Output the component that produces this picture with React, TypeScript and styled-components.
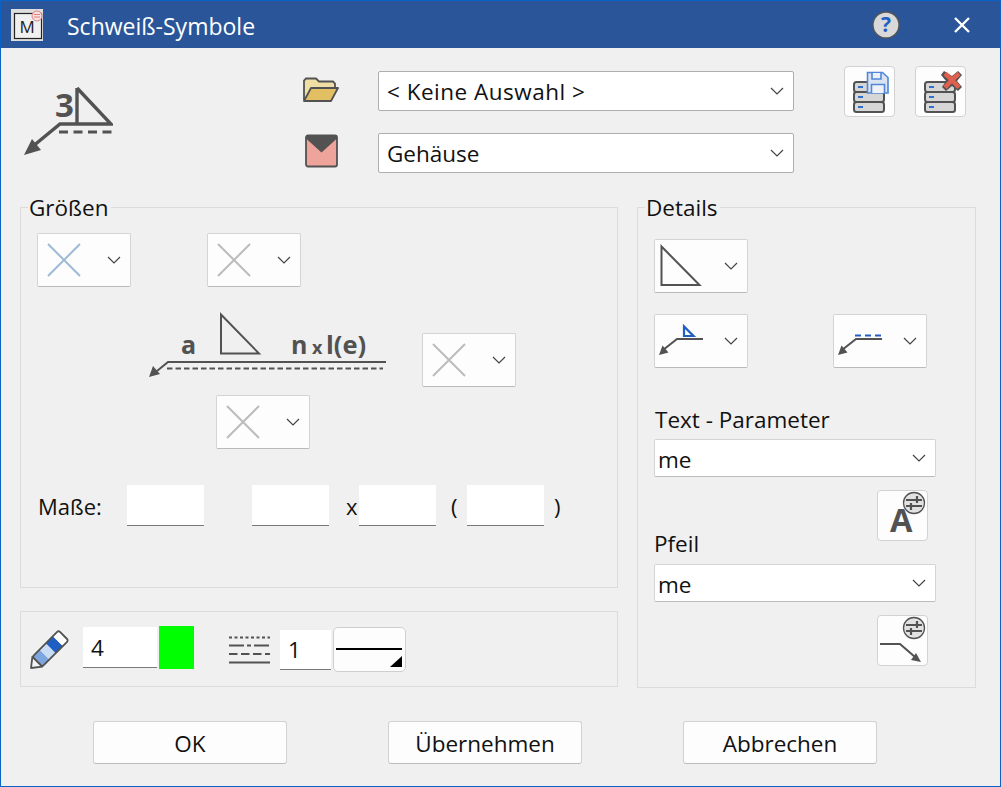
import React from 'react';
import styled, { createGlobalStyle } from 'styled-components';

const GlobalStyle = createGlobalStyle`
  html, body {
    margin: 0;
    padding: 0;
    background: #f0f0f0;
  }
  * {
    box-sizing: border-box;
  }
`;

const INK = '#525252';
const BLUE = '#1f5fc4';

const Dialog = styled.div`
  width: 1001px;
  height: 787px;
  overflow: hidden;
  display: flex;
  flex-direction: column;
  border: 1px solid #0a62c6;
  background: #f0f0f0;
  font-family: 'Open Sans', 'Noto Sans', sans-serif;
  font-size: 22.5px;
  color: #111;
`;

const TitleBar = styled.header`
  height: 47px;
  flex: none;
  display: flex;
  align-items: center;
  padding: 0 30px 0 10px;
  background: #2a5699;
  color: #fff;
`;

const TitleText = styled.span`
  margin-left: 24px;
  padding-top: 2px;
  font-size: 23px;
  flex: 1;
`;

const CloseIcon = styled.svg`
  margin-left: 53px;
`;

const Top = styled.section`
  height: 147px;
  flex: none;
  display: flex;
  align-items: flex-start;
`;

const WeldIcon = styled.svg`
  margin: 30px 0 0 23px;
  flex: none;
`;

const PickerStack = styled.div`
  width: 493px;
  margin: 23px 0 0 188px;
  display: flex;
  flex-direction: column;
  gap: 22px;
`;

const PickerRow = styled.div`
  display: flex;
  align-items: center;
`;

const PickerIcon = styled.svg`
  flex: none;
  margin-right: 38px;
`;

const Select = styled.div`
  height: 38px;
  flex: 1;
  display: flex;
  align-items: center;
  justify-content: space-between;
  padding: 0 9px 0 3px;
  background: #fff;
  border: 1px solid #d4d4d4;
  border-bottom-color: #bcbcbc;
  border-radius: 2px;
`;

const SelectText = styled.span<{ $spaced?: boolean; $nudge?: number }>`
  padding-top: ${p => p.$nudge ?? 2}px;
  letter-spacing: ${p => (p.$spaced ? '0.5px' : '0')};
`;

const TallSelect = styled(Select)`
  height: 40px;
  padding-left: 8px;
  border-color: #aeaeae;
`;

const ToolButtons = styled.div`
  margin: 18px 0 0 50px;
  display: flex;
  gap: 20px;
`;

const IconButton = styled.button`
  width: 51px;
  height: 51px;
  padding: 0;
  display: block;
  background: #fdfdfd;
  border: 1px solid #d2d2d2;
  border-radius: 4px;
  svg {
    display: block;
    margin: -1px;
  }
`;

const Main = styled.main`
  display: grid;
  grid-template-columns: 598px 339px;
  column-gap: 19px;
  padding-left: 19px;
  align-items: start;
`;

const LeftColumn = styled.div`
  display: flex;
  flex-direction: column;
  gap: 23px;
`;

const Group = styled.fieldset<{ $height: number }>`
  height: ${p => p.$height}px;
  margin: 0;
  padding: 2px 0 0 16px;
  border: 1px solid #dcdcdc;
  min-width: 0;
`;

const Legend = styled.legend`
  margin-left: -9px;
  padding: 0 2px 0 1px;
  height: 24px;
  line-height: 26px;
  font-size: 22.5px;
`;

const ComboRow = styled.div<{ $top: number; $gap?: number; $indent?: number }>`
  display: flex;
  align-items: flex-start;
  margin-top: ${p => p.$top}px;
  margin-left: ${p => p.$indent ?? 0}px;
  gap: ${p => p.$gap ?? 0}px;
`;

const Combo = styled.div<{ $offset?: number }>`
  width: 94px;
  height: 54px;
  flex: none;
  margin-top: ${p => p.$offset ?? 0}px;
  display: flex;
  align-items: center;
  justify-content: space-between;
  padding-right: 9px;
  background: #fdfdfd;
  border: 1px solid #d4d4d4;
  border-bottom-color: #bababa;
  border-radius: 2px;
  svg:first-child {
    margin: -1px;
  }
`;

const Diagram = styled.svg`
  flex: none;
`;

const MeasureRow = styled.div`
  display: flex;
  align-items: center;
  margin-top: 36px;
  height: 41px;
`;

const MeasureLabel = styled.span`
  width: 90px;
  flex: none;
  padding-left: 1px;
  font-size: 22px;
`;

const Glyph = styled.span<{ $width: number; $pad?: number }>`
  width: ${p => p.$width}px;
  flex: none;
  padding-left: ${p => p.$pad ?? 0}px;
  font-size: 22px;
`;

const Field = styled.input<{ $width: number; $height?: number }>`
  width: ${p => p.$width}px;
  height: ${p => p.$height ?? 41}px;
  flex: none;
  padding: 0 8px;
  background: #fff;
  border: 0;
  border-bottom: 1px solid #7a7a7a;
  border-radius: 0;
  font: inherit;
  font-size: 22.5px;
  color: #111;
`;

const LineBar = styled.div`
  height: 76px;
  display: flex;
  align-items: center;
  padding-left: 9px;
  border: 1px solid #dcdcdc;
`;

const Spaced = styled.div<{ $left: number; $top?: number }>`
  display: flex;
  flex: none;
  margin-left: ${p => p.$left}px;
  margin-top: ${p => p.$top ?? 0}px;
`;

const Swatch = styled.div`
  width: 35px;
  height: 43px;
  background: #00ff00;
`;

const LinePreview = styled.div`
  width: 73px;
  height: 45px;
  background: #fdfdfd;
  border: 1px solid #cfcfcf;
  border-radius: 5px;
  svg {
    display: block;
    margin: -1px;
  }
`;

const FieldLabel = styled.div`
  height: 30px;
  margin: 37px 0 4px 1px;
  line-height: 30px;
`;

const WideSelect = styled(Select)`
  width: 282px;
  flex: none;
`;

const LabelWithButton = styled.div`
  width: 274px;
  height: 70px;
  margin: 13px 0 4px;
  display: flex;
  justify-content: space-between;
`;

const LabelBelow = styled.span`
  align-self: flex-end;
  height: 31px;
  line-height: 30px;
`;

const ArrowButtonSlot = styled.div`
  margin: 13px 0 0 223px;
  width: 51px;
`;

const Footer = styled.footer`
  margin-top: 33px;
  padding-left: 92px;
  display: flex;
  gap: 101px;
`;

const PushButton = styled.button`
  width: 194px;
  height: 43px;
  padding: 2px 0 0;
  background: #fdfdfd;
  border: 1px solid #d2d2d2;
  border-bottom-color: #bcbcbc;
  border-radius: 3px;
  font: inherit;
  font-size: 22.5px;
  color: #111;
`;

const Chevron = () => (
  <svg width="14" height="8" viewBox="0 0 14 8" fill="none">
    <path d="M1 1l6 6 6-6" stroke="#444" strokeWidth="1.2" />
  </svg>
);

const CrossSymbol = ({ color = '#bcbcbc' }: { color?: string }) => (
  <svg width="54" height="54" viewBox="0 0 54 54" fill="none">
    <path d="M11 11l32 32M43 11L11 43" stroke={color} strokeWidth="2" />
  </svg>
);

const TriangleSymbol = () => (
  <svg width="54" height="54" viewBox="0 0 54 54" fill="none">
    <path d="M7.5 7.5v38.500h38z" stroke={INK} strokeWidth="2" />
  </svg>
);

const Leader = () => (
  <g>
    <path d="M49 25H23L9 36" stroke={INK} strokeWidth="2" fill="none" />
    <path d="M5 41l3.500-9.500 6 7z" fill={INK} />
  </g>
);

const LeaderTriangle = () => (
  <svg width="54" height="54" viewBox="0 0 54 54" fill="none">
    <Leader />
    <path d="M30 12.500v9.500h9.500z" stroke={BLUE} strokeWidth="2.200" />
  </svg>
);

const LeaderDashed = () => (
  <svg width="54" height="54" viewBox="0 0 54 54" fill="none">
    <Leader />
    <path d="M22 21.500h27" stroke={BLUE} strokeWidth="2.200" strokeDasharray="6 4" />
  </svg>
);

const DiskStack = () => (
  <g fill="#d6d6d6" stroke={INK} strokeWidth="2">
    <rect x="10" y="16" width="30" height="10" rx="2.500" />
    <rect x="10" y="26" width="30" height="10" rx="2.500" />
    <rect x="10" y="36" width="30" height="10" rx="2.500" />
    <path d="M14 21h5M14 31h5M14 41h5" stroke="#2f6fd0" />
  </g>
);

const SaveStackIcon = () => (
  <svg width="51" height="51" viewBox="0 0 51 51">
    <DiskStack />
    <path d="M23.500 6.500h15l5.500 5v15.500h-20.500z" fill="#d9e3f1" stroke="#5087d8" strokeWidth="1.600" />
    <path d="M28 7v6h9V7M27.500 27v-8.500h13V27" fill="#eef2f8" stroke="#5087d8" strokeWidth="1.600" />
  </svg>
);

const DeleteStackIcon = () => (
  <svg width="51" height="51" viewBox="0 0 51 51">
    <DiskStack />
    <path d="M29 5l8 5 6-5 4 4-5 6 5 6-4 4-6-5-6 5-4-4 4-6-5-6z" fill={INK} />
    <path d="M30 7.500l7 6.500 7-6.500M30 21.500l7-7.500 7 7.500" stroke="#e0604f" strokeWidth="4.500" fill="none" />
  </svg>
);

const Sliders = () => (
  <g fill="none">
    <circle cx="37" cy="13" r="10.500" fill="#e2e2e2" stroke={INK} strokeWidth="1.300" />
    <path d="M29 10h16M29 16h16" stroke={INK} strokeWidth="1.800" />
    <path d="M40 6v7M34 13v7" stroke={INK} strokeWidth="2.200" />
  </g>
);

const Note = styled.text`
  font-family: 'Open Sans', sans-serif;
  font-weight: 700;
  fill: ${INK};
`;

export default function App() {
  return (
    <>
      <GlobalStyle />
      <Dialog>
        <TitleBar>
          <svg width="32" height="32" viewBox="0 0 32 32">
            <rect width="32" height="32" fill="#dedede" />
            <rect x="3.500" y="4.500" width="27" height="25" fill="#f0f0f0" stroke="#222" strokeWidth="1.200" />
            <text x="8.500" y="24" fontSize="17" fontFamily="Open Sans, sans-serif" fill="#222">M</text>
            <circle cx="26" cy="7" r="5" fill="#f4e0e0" stroke="#e28080" />
            <path d="M23 5.500h6M23 8h6" stroke="#e28080" />
          </svg>
          <TitleText>Schweiß-Symbole</TitleText>
          <svg width="30" height="32" viewBox="-1 -2 30 32">
            <circle cx="14" cy="14" r="13" fill="#d9d9d9" stroke="#555" strokeWidth="1.300" />
            <text x="14" y="21" textAnchor="middle" fontSize="21" fontWeight="700" fontFamily="Open Sans, sans-serif" fill={BLUE}>?</text>
          </svg>
          <CloseIcon width="16" height="16" viewBox="0 0 16 16">
            <path d="M1 1l14 14M15 1L1 15" stroke="#fff" strokeWidth="2.400" />
          </CloseIcon>
        </TitleBar>

        <Top>
          <WeldIcon width="89" height="78" viewBox="0 -8 89 78" fill="none">
            <Note x="31" y="31" fontSize="33">3</Note>
            <path d="M53 2v36M53 2l34 36H36L8 61" stroke={INK} strokeWidth="3.400" />
            <path d="M0 69l8-16 9 11z" fill={INK} />
            <path d="M35 46h53" stroke={INK} strokeWidth="3.200" strokeDasharray="9 5.500" />
          </WeldIcon>
          <PickerStack>
            <PickerRow>
              <PickerIcon width="39" height="40" viewBox="0 0 39 40">
                <path d="M3 29V9.500l2-2h10l3 3h14l2 2v4" fill="#f0dfa4" stroke={INK} strokeWidth="1.800" />
                <path d="M3 30l7-13h27l-7 13z" fill="#e2bf63" stroke={INK} strokeWidth="1.800" strokeLinejoin="round" />
              </PickerIcon>
              <TallSelect>
                <SelectText $spaced $nudge={0}>&lt; Keine Auswahl &gt;</SelectText>
                <Chevron />
              </TallSelect>
            </PickerRow>
            <PickerRow>
              <PickerIcon width="39" height="40" viewBox="0 0 39 40">
                <rect x="5" y="2.500" width="31" height="31" rx="2" fill="#eea39b" stroke={INK} strokeWidth="1.800" />
                <path d="M5 2.500h31v3L20.500 19.500 5 5.500z" fill={INK} />
              </PickerIcon>
              <TallSelect>
                <SelectText $nudge={0}>Gehäuse</SelectText>
                <Chevron />
              </TallSelect>
            </PickerRow>
          </PickerStack>
          <ToolButtons>
            <IconButton type="button"><SaveStackIcon /></IconButton>
            <IconButton type="button"><DeleteStackIcon /></IconButton>
          </ToolButtons>
        </Top>

        <Main>
          <LeftColumn>
            <Group $height={393}>
              <Legend>Größen</Legend>
              <ComboRow $top={12} $gap={76}>
                <Combo><CrossSymbol color="#9dbbd6" /><Chevron /></Combo>
                <Combo><CrossSymbol /><Chevron /></Combo>
              </ComboRow>
              <ComboRow $top={23} $indent={108} $gap={32}>
                <Diagram width="245" height="72" viewBox="0 0 245 72" fill="none">
                  <path d="M76 4.500v39h38z" stroke={INK} strokeWidth="2" />
                  <Note x="36" y="44" fontSize="25">a</Note>
                  <Note x="146" y="44" fontSize="25">n</Note>
                  <Note x="167" y="44" fontSize="18">x</Note>
                  <Note x="181" y="44" fontSize="25.500">l(e)</Note>
                  <path d="M241 52H23L12 61" stroke={INK} strokeWidth="2" />
                  <path d="M4 67l4-11 7 8z" fill={INK} />
                  <path d="M22 58.500h216" stroke={INK} strokeWidth="2" strokeDasharray="5.500 3" />
                </Diagram>
                <Combo $offset={23}><CrossSymbol /><Chevron /></Combo>
              </ComboRow>
              <ComboRow $top={8} $indent={179}>
                <Combo><CrossSymbol /><Chevron /></Combo>
              </ComboRow>
              <MeasureRow>
                <MeasureLabel>Maße:</MeasureLabel>
                <Field $width={77} readOnly />
                <Glyph $width={48} />
                <Field $width={77} readOnly />
                <Glyph $width={30} $pad={17}>x</Glyph>
                <Field $width={77} readOnly />
                <Glyph $width={31} $pad={15}>(</Glyph>
                <Field $width={77} readOnly />
                <Glyph $width={26} $pad={10}>)</Glyph>
              </MeasureRow>
            </Group>

            <LineBar>
              <Diagram width="40" height="40" viewBox="0 0 40 40" fill="none">
                <g transform="translate(1 39) rotate(-45)" stroke={INK} strokeWidth="1.800">
                  <path d="M0 0l9-7v14z" fill="#f4f4f4" strokeLinejoin="round" />
                  <rect x="9" y="-7" width="10" height="14" fill="#7ea6de" stroke="none" />
                  <rect x="19" y="-7" width="9" height="14" fill="#cadcf4" stroke="none" />
                  <rect x="28" y="-7" width="10" height="14" fill={BLUE} stroke="none" />
                  <rect x="38" y="-7" width="8" height="14" fill="#fff" stroke="none" />
                  <rect x="9" y="-7" width="37" height="14" rx="2" />
                </g>
              </Diagram>
              <Spaced $left={13} $top={-3}><Field $width={74} defaultValue="4" readOnly /></Spaced>
              <Spaced $left={2} $top={-3}><Swatch /></Spaced>
              <Spaced $left={35}>
                <svg width="41" height="32" viewBox="0 0 41 32" fill="none">
                  <path d="M0 4.500h41" stroke={INK} strokeWidth="2" strokeDasharray="3 2.500" />
                  <path d="M0 12.500h41" stroke={INK} strokeWidth="2" strokeDasharray="15 3 4 3" />
                  <path d="M0 21h41" stroke={INK} strokeWidth="2" strokeDasharray="8.500 3.500" />
                  <path d="M0 29.500h41" stroke={INK} strokeWidth="2" />
                </svg>
              </Spaced>
              <Spaced $left={10} $top={2}><Field $width={51} $height={40} defaultValue="1" readOnly /></Spaced>
              <Spaced $left={2} $top={1}>
                <LinePreview>
                  <svg width="73" height="45" viewBox="0 0 73 45">
                    <path d="M3 22h66" stroke="#000" strokeWidth="2" />
                    <path d="M57 40l12-11v11z" fill="#000" />
                  </svg>
                </LinePreview>
              </Spaced>
            </LineBar>
          </LeftColumn>

          <Group $height={493}>
            <Legend>Details</Legend>
            <ComboRow $top={18}>
              <Combo><TriangleSymbol /><Chevron /></Combo>
            </ComboRow>
            <ComboRow $top={21} $gap={85}>
              <Combo><LeaderTriangle /><Chevron /></Combo>
              <Combo><LeaderDashed /><Chevron /></Combo>
            </ComboRow>
            <FieldLabel>Text - Parameter</FieldLabel>
            <WideSelect>
              <SelectText>me</SelectText>
              <Chevron />
            </WideSelect>
            <LabelWithButton>
              <LabelBelow>Pfeil</LabelBelow>
              <IconButton type="button">
                <svg width="51" height="51" viewBox="0 0 51 51">
                  <Note x="13" y="41.500" fontSize="32.500">A</Note>
                  <Sliders />
                </svg>
              </IconButton>
            </LabelWithButton>
            <WideSelect>
              <SelectText>me</SelectText>
              <Chevron />
            </WideSelect>
            <ArrowButtonSlot>
              <IconButton type="button">
                <svg width="51" height="51" viewBox="0 0 51 51" fill="none">
                  <Sliders />
                  <path d="M3 29h20l15 13" stroke={INK} strokeWidth="2" />
                  <path d="M44 47l-10-2 5-7z" fill={INK} />
                </svg>
              </IconButton>
            </ArrowButtonSlot>
          </Group>
        </Main>

        <Footer>
          <PushButton type="button">OK</PushButton>
          <PushButton type="button">Übernehmen</PushButton>
          <PushButton type="button">Abbrechen</PushButton>
        </Footer>
      </Dialog>
    </>
  );
}
